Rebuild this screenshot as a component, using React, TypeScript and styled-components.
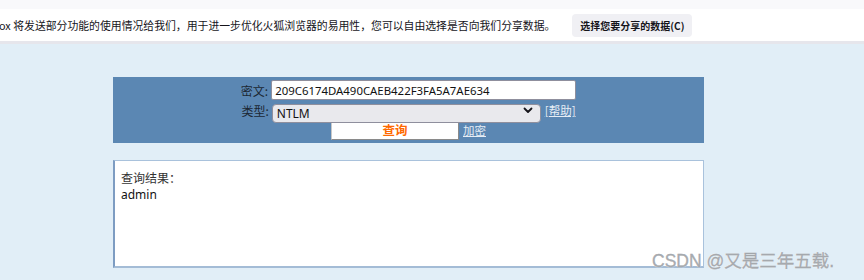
import React from "react";
import styled, { createGlobalStyle } from "styled-components";

const Global = createGlobalStyle`
  html, body { margin: 0; padding: 0; }
  body {
    background: #e1eef7;
    font-family: "Noto Sans", "Noto Sans CJK SC", sans-serif;
    width: 864px;
    height: 280px;
    overflow: hidden;
  }
`;

const Page = styled.div`
  position: relative;
  width: 864px;
  height: 280px;
  overflow: hidden;
`;

const TopStrip = styled.div`
  height: 9px;
  background: #f9f9fb;
`;

const NotifBar = styled.div`
  height: 32px;
  background: #ffffff;
  border-bottom: 3px solid #e6e6ec;
  display: flex;
  align-items: center;
  font-family: "Noto Sans CJK SC", sans-serif;
  font-size: 10.85px;
  color: #15141a;
  white-space: nowrap;
`;

const NotifText = styled.span`
  margin-left: -1px;
`;

const NotifButton = styled.button`
  margin-left: 17px;
  height: 23px;
  width: 120px;
  padding: 0;
  border: none;
  border-radius: 4px;
  background: #f0f0f4;
  font-family: "Noto Sans CJK SC", sans-serif;
  font-size: 10px;
  font-weight: 700;
  color: #15141a;
`;

const Content = styled.div`
  padding: 33px 0 0 113px;
  display: flex;
  flex-direction: column;
  gap: 17px;
`;

const Panel = styled.div`
  width: 591px;
  height: 66px;
  box-sizing: border-box;
  background: #5b87b3;
  padding-top: 3px;
  display: flex;
  flex-direction: column;
  align-items: center;
`;

const Row = styled.div`
  display: flex;
  align-items: center;
  height: 20px;
`;

const Label = styled.span`
  font-family: "Noto Sans CJK SC", sans-serif;
  font-size: 12px;
  color: #1c2733;
  margin-right: 3px;
`;

const TextInput = styled.input`
  width: 305px;
  height: 20px;
  box-sizing: border-box;
  border: 1px solid #8f8f9d;
  border-radius: 2px;
  background: #fff;
  padding: 0 3px;
  font-family: "Noto Sans", sans-serif;
  font-size: 11.4px;
  color: #111;
  outline: none;
`;

const SelectWrap = styled.div`
  position: relative;
  width: 269px;
  height: 19px;
`;

const Select = styled.select`
  appearance: none;
  width: 100%;
  height: 19px;
  box-sizing: border-box;
  border: 1px solid #8f8f9d;
  border-radius: 4px;
  background: #e9e9ed;
  padding: 0 4px;
  font-family: "Noto Sans", sans-serif;
  font-size: 12px;
  color: #111;
  outline: none;
`;

const Chevron = styled.svg`
  position: absolute;
  right: 8px;
  top: 6px;
  pointer-events: none;
`;

const LightLink = styled.a`
  font-family: "Noto Sans CJK SC", sans-serif;
  font-size: 11.5px;
  color: #e6edf5;
  text-decoration: underline;
  margin-left: 4px;
  cursor: pointer;
`;

const QueryButton = styled.button`
  width: 128px;
  height: 20px;
  box-sizing: border-box;
  background: #fff;
  border: 1px solid #c8c8c8;
  border-right-color: #8a8a8a;
  border-bottom-color: #8a8a8a;
  font-family: "Noto Sans CJK SC", sans-serif;
  font-size: 12.5px;
  font-weight: 700;
  color: #ff6a00;
  padding: 0;
  line-height: 18px;
`;

const ResultBox = styled.div`
  width: 591px;
  height: 108px;
  box-sizing: border-box;
  background: #fff;
  border: 1px solid #a9c2dc;
  border-left: 2px solid #7d9cc2;
  border-bottom: 2px solid #a4bcd6;
  padding: 8px 0 0 6px;
  font-size: 12px;
  line-height: 17px;
  color: #222;
`;

const ResultLine = styled.div<{ latin?: boolean }>`
  font-family: ${(p) =>
    p.latin ? `"Noto Sans", sans-serif` : `"Noto Sans CJK SC", sans-serif`};
  color: ${(p) => (p.latin ? "#111" : "#333")};
`;

const Watermark = styled.div`
  position: absolute;
  left: 652px;
  top: 247px;
  font-family: "Liberation Sans", "Noto Sans CJK SC", sans-serif;
  font-size: 17.5px;
  color: #a9adb2;
  white-space: nowrap;
  text-shadow: 0 0 1px #ffffff, 0 0 1px #ffffff;
  -webkit-text-stroke: 0.3px #9ea2a6;
`;

export default function App() {
  return (
    <Page>
      <Global />
      <TopStrip />
      <NotifBar>
        <NotifText>
          ox 将发送部分功能的使用情况给我们，用于进一步优化火狐浏览器的易用性，您可以自由选择是否向我们分享数据。
        </NotifText>
        <NotifButton>选择您要分享的数据(C)</NotifButton>
      </NotifBar>
      <Content>
        <Panel>
          <Row>
            <Label>密文:</Label>
            <TextInput defaultValue="209C6174DA490CAEB422F3FA5A7AE634" />
          </Row>
          <Row>
            <Label>类型:</Label>
            <SelectWrap>
              <Select defaultValue="NTLM">
                <option>NTLM</option>
              </Select>
              <Chevron width="10" height="7" viewBox="0 0 10 7">
                <path d="M1.5 1.5 L5 5 L8.5 1.5" fill="none" stroke="#15141a" strokeWidth="1.8" strokeLinecap="round" strokeLinejoin="round" />
              </Chevron>
            </SelectWrap>
            <LightLink>[帮助]</LightLink>
          </Row>
          <Row>
            <QueryButton>查询</QueryButton>
            <LightLink>加密</LightLink>
          </Row>
        </Panel>
        <ResultBox>
          <ResultLine>查询结果：</ResultLine>
          <ResultLine latin>admin</ResultLine>
        </ResultBox>
      </Content>
      <Watermark>CSDN @又是三年五载.</Watermark>
    </Page>
  );
}
